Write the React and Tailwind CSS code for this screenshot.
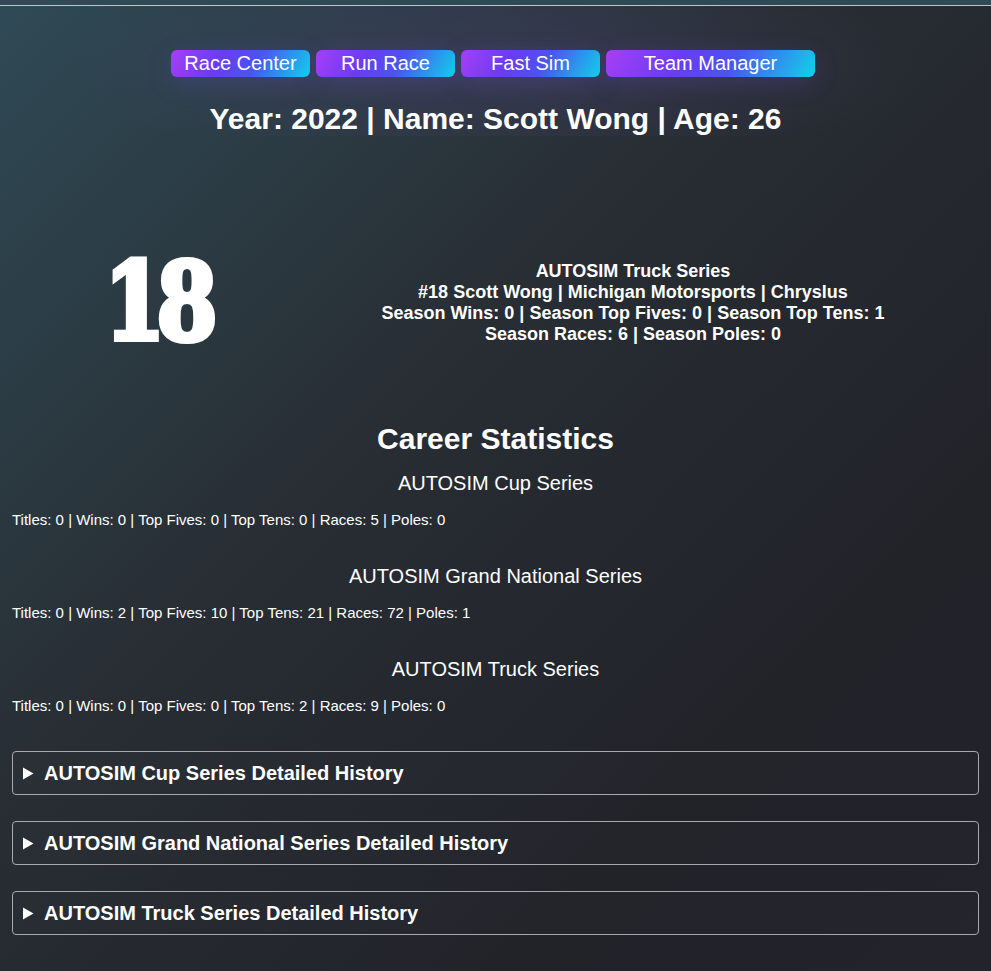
import React from 'react'

const navButtons = [
    { label: 'Race Center', width: 'w-[139px]' },
    { label: 'Run Race', width: 'w-[139px]' },
    { label: 'Fast Sim', width: 'w-[139px]' },
    { label: 'Team Manager', width: 'w-[209px]' },
]

const careerStats = [
    { series: 'AUTOSIM Cup Series', line: 'Titles: 0 | Wins: 0 | Top Fives: 0 | Top Tens: 0 | Races: 5 | Poles: 0' },
    { series: 'AUTOSIM Grand National Series', line: 'Titles: 0 | Wins: 2 | Top Fives: 10 | Top Tens: 21 | Races: 72 | Poles: 1' },
    { series: 'AUTOSIM Truck Series', line: 'Titles: 0 | Wins: 0 | Top Fives: 0 | Top Tens: 2 | Races: 9 | Poles: 0' },
]

const histories = [
    'AUTOSIM Cup Series Detailed History',
    'AUTOSIM Grand National Series Detailed History',
    'AUTOSIM Truck Series Detailed History',
]

export default function App() {
    return (
        <div
            className="min-h-[971px] text-white bg-[linear-gradient(135deg,#2f4a56_0%,#282e34_40%,#212329_75%,#22232b_100%)] font-['Liberation_Sans',Arial,sans-serif]"
        >
            {/* top strip */}
            <div className="h-[5px] bg-[#2e4a57]"></div>
            <div className="h-[1px] bg-[#c4c4c4]"></div>

            <div className="bg-[radial-gradient(ellipse_420px_110px_at_50%_60px,rgba(90,70,140,0.28),transparent)]">
                {/* Nav */}
                <div className="flex justify-center gap-[6px] pt-[44px] pr-[5px]">
                    {navButtons.map((b) => (
                        <button
                            key={b.label}
                            className={`${b.width} h-[27px] rounded-[6px] text-[20px] leading-[27px] text-white bg-[linear-gradient(120deg,#a63ff5_0%,#6a3cf2_35%,#4a55ee_60%,#0fd3ea_100%)] shadow-[0_6px_24px_rgba(120,80,230,0.22)]`}
                        >
                            {b.label}
                        </button>
                    ))}
                </div>

                <h1 className="mt-[25px] text-center text-[30px] leading-[34px] font-bold">
                    Year: 2022 | Name: Scott Wong | Age: 26
                </h1>
            </div>

            {/* Current season */}
            <div className="mt-[67px] h-[200px] flex items-center">
                <div className="w-[325px] flex justify-center pr-[12px]">
                    <span className="inline-block -mt-[2px] scale-x-[0.82] tracking-[-10px] text-[106px] leading-[106px] font-bold font-['DejaVu_Serif',serif] [-webkit-text-stroke:6px_white]">
                        18
                    </span>
                </div>
                <div className="w-[616px] text-center text-[18px] leading-[21px] font-bold">
                    <div>AUTOSIM Truck Series</div>
                    <div>#18 Scott Wong | Michigan Motorsports | Chryslus</div>
                    <div>Season Wins: 0 | Season Top Fives: 0 | Season Top Tens: 1</div>
                    <div>Season Races: 6 | Season Poles: 0</div>
                </div>
            </div>

            {/* Career */}
            <h2 className="mt-[19px] text-center text-[30px] leading-[34px] font-bold">Career Statistics</h2>

            <div className="flex flex-col gap-[37px] mt-[16px]">
                {careerStats.map((s) => (
                    <div key={s.series}>
                        <h3 className="text-center text-[20px] leading-[23px]">{s.series}</h3>
                        <p className="mt-[16px] pl-[12px] text-[15px] leading-[17px]">{s.line}</p>
                    </div>
                ))}
            </div>

            <div className="flex flex-col gap-[26px] mt-[37px] px-[12px] pb-[36px]">
                {histories.map((h) => (
                    <div
                        key={h}
                        className="h-[44px] flex items-center border border-[#a9a9ad] rounded-[4px] bg-[rgba(255,255,255,0.01)] pl-[9px]"
                    >
                        <svg width="12" height="13" viewBox="0 0 12 13" className="shrink-0 mr-[10px]">
                            <path d="M1 0.5 L11.5 6.5 L1 12.5 Z" fill="white" />
                        </svg>
                        <span className="text-[20px] leading-[23px] font-bold">{h}</span>
                    </div>
                ))}
            </div>
        </div>
    )
}
